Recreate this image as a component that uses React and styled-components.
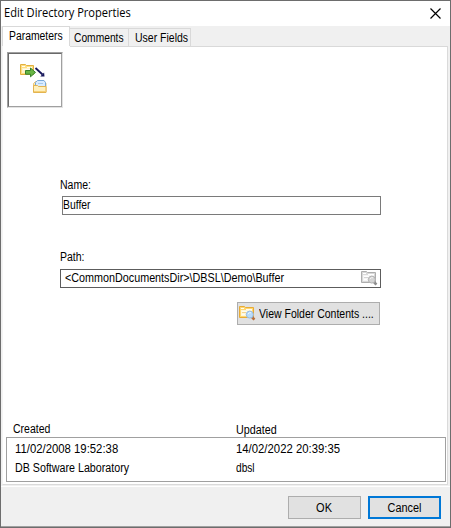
import React from 'react';
import styled, { createGlobalStyle } from 'styled-components';

const Global = createGlobalStyle`
  * { box-sizing: border-box; }
  body { margin: 0; background: #fff; }
`;

const Dialog = styled.div`
  width: 451px;
  height: 528px;
  display: flex;
  flex-direction: column;
  background: #f0f0f0;
  border: 1px solid #6d6d6d;
  color: #000;
  font: 12.5px/16px "Liberation Sans", Arial, sans-serif;
  overflow: hidden;
`;

/* The dialog face is narrower than the base font, so each label is condensed. */
const Text = styled.span`
  display: block;
  width: max-content;
  white-space: pre;
  margin-top: ${(p) => p.$drop || 0}px;
  transform: scaleX(${(p) => p.$scale || 0.84});
  transform-origin: ${(p) => p.$origin || 'left'} center;
`;

const TitleBar = styled.header`
  height: 25px;
  flex: none;
  display: flex;
  justify-content: space-between;
  background: #fff;
  padding: 4px 9px 0 3px;
  font: 12px/16px "Open Sans", "Noto Sans", sans-serif;
`;

const CloseButton = styled.button`
  width: 11px;
  height: 11px;
  margin-top: 3px;
  padding: 0;
  border: 0;
  background: none;
  svg { display: block; }
`;

const TabStrip = styled.nav`
  height: 20px;
  flex: none;
  display: flex;
  align-items: flex-end;
  padding-left: 1px;
`;

const Tab = styled.div`
  width: ${(p) => p.$width}px;
  height: ${(p) => (p.$active ? 20 : 18)}px;
  padding: ${(p) => (p.$active ? '1px 0 0 6px' : `1px 0 0 ${p.$indent}px`)};
  background: ${(p) => (p.$active ? '#fff' : '#f0f0f0')};
  border: solid #d9d9d9;
  border-width: 1px 1px 0 ${(p) => (p.$active ? 1 : 0)}px;
`;

const Page = styled.main`
  height: 439px;
  flex: none;
  margin: 0 2px 0 1px;
  display: flex;
  flex-direction: column;
  background: #fff;
  border: 1px solid #dadada;
  border-left-color: #f4f4f4;
  border-top: 0;
`;

const PageEdge = styled.div`
  height: 1px;
  flex: none;
  margin-left: 67px;
  background: #d9d9d9;
`;

const IconFrame = styled.div`
  width: 56px;
  height: 56px;
  flex: none;
  margin: 5px 0 0 4px;
  border: 1px solid;
  border-color: #a0a0a0 #e3e3e3 #e3e3e3 #a0a0a0;
`;

const IconWell = styled.div`
  width: 54px;
  height: 54px;
  border: 1px solid;
  border-color: #696969 #a0a0a0 #a0a0a0 #696969;
  svg { display: block; }
`;

const Form = styled.section`
  height: 313px;
  flex: none;
  width: 378px;
  padding: 69px 0 0 57px;
`;

const Field = styled.div`
  height: 19px;
  display: flex;
  justify-content: space-between;
  margin: ${(p) => p.$margin};
  padding: ${(p) => p.$pad};
  border: 1px solid ${(p) => p.$line};
  svg { display: block; margin-top: 1px; }
`;

const PathLabel = styled.div`
  margin-top: 34px;
  height: 20px;
`;

const Button = styled.button`
  display: flex;
  width: ${(p) => p.$width || 73}px;
  height: 23px;
  padding: 0;
  align-items: center;
  justify-content: ${(p) => (p.$leading ? 'flex-start' : 'center')};
  margin: ${(p) => p.$margin || 0};
  font: inherit;
  color: inherit;
  background: #e1e1e1;
  border: ${(p) => (p.$focused ? '2px solid #0078d7' : '1px solid #adadad')};
  svg { flex: none; margin: 0 3px 1px 1px; }
`;

const Columns = styled.div`
  display: grid;
  grid-template-columns: ${(p) => p.$first}px 1fr;
  padding-left: ${(p) => p.$indent}px;
`;

const Headings = styled(Columns)`
  height: 17px;
  flex: none;
`;

const AuditBox = styled.section`
  height: 45px;
  flex: none;
  margin: -1px 1px 0 3px;
  border: 1px solid #a0a0a0;
  padding-top: 3px;
  display: flex;
  flex-direction: column;
  gap: 3px;
`;

const Footer = styled.footer`
  flex: 1;
  margin-top: 1px;
  display: flex;
  gap: 7px;
  justify-content: flex-end;
  padding: 9px 9px 0 0;
  border-top: 1px solid #fff;
  border-bottom: 1px solid #a0a0a0;
`;

const BrowseIcon = ({ muted }) => {
  const c = muted
    ? { edge: '#adadad', body: '#d9d9d9', paper: '#f5f5f5', lens: '#d4d4d4', rim: '#b3b3b3', grip: '#8c8c8c' }
    : { edge: '#e8ab35', body: '#ffd772', paper: '#fff6d8', lens: '#b9dcfa', rim: '#96bbe3', grip: '#b7703d' };
  return (
    <svg width="17" height="15" viewBox="0 0 17 15">
      <path d="M.5.5h5l1 1h8v10H.5z" fill={c.body} stroke={c.edge} />
      <path d="M2 4h11v6H2z" fill={c.paper} />
      <path d="M2 2.5h3M7 3.5h6M3 5.5h5M3 8.5h3" stroke={muted ? '#fff' : '#fffdf1'} />
      <path d="M3 6.5h4" stroke={c.edge} opacity=".45" />
      <path d="M13 11l2.4 2.6" stroke={c.grip} strokeWidth="2.6" />
      <circle cx="10.8" cy="8.6" r="3.5" fill={c.lens} stroke={c.rim} />
      <path d="M9 8q1-1.8 3-1.3" stroke="#fff" fill="none" opacity=".7" />
    </svg>
  );
};

const TransferIcon = () => (
  <svg width="52" height="52" viewBox="0 0 52 52">
    <path d="M11.5 10.5h5l1 1h7v9h-13z" fill="#ffdf82" stroke="#e2b03f" />
    <path d="M13 14h10v5H13z" fill="#fff3c6" />
    <path d="M13 12.5h3M18 13.5h5M14 15.5h7" stroke="#fffdf0" />
    <path d="M16.5 16.5h5v-2.5l5 4.4-5 4.4v-2.6h-5z" fill="#68b545" stroke="#38822c" />
    <path d="M26.5 14l7 6.5" stroke="#17175c" strokeWidth="1.8" />
    <path d="M35.5 22.5h-4.2l3.8-4z" fill="#17175c" />
    <path d="M24.5 38v-8.5l2-2h9l1.5 2V38z" fill="#ffe9ad" stroke="#e8c57a" />
    <path d="M26.5 33v-4.5l2-2H35l1.500 2V33z" fill="#d8ebff" stroke="#78a8d9" />
    <path d="M29 29.5h5" stroke="#a8caec" />
    <path d="M24.5 31.5h4l1 1H37v6H24.5z" fill="#fff0bd" stroke="#e3b450" />
    <path d="M25 37.5h12" stroke="#f5cf75" />
  </svg>
);

export default function App() {
  return (
    <Dialog>
      <Global />
      <TitleBar>
        <Text $scale={0.925}>Edit Directory Properties</Text>
        <CloseButton aria-label="Close">
          <svg width="11" height="11" viewBox="0 0 11 11">
            <path d="M.5.5l10 10M10.5.5l-10 10" stroke="#000" strokeWidth="1.2" />
          </svg>
        </CloseButton>
      </TitleBar>
      <TabStrip>
        <Tab $active $width={68}><Text $scale={0.83}>Parameters</Text></Tab>
        <Tab $width={59} $indent={4}><Text $scale={0.82}>Comments</Text></Tab>
        <Tab $width={62} $indent={6}><Text>User Fields</Text></Tab>
      </TabStrip>
      <Page>
        <PageEdge />
        <IconFrame><IconWell><TransferIcon /></IconWell></IconFrame>
        <Form>
          <Text>Name:</Text>
          <Field $line="#7a7a7a" $margin="3px 0 0 2px" $pad="0">
            <Text $scale={0.83}>Buffer</Text>
          </Field>
          <PathLabel><Text>Path:</Text></PathLabel>
          <Field $line="#5c5c5c" $margin="0" $pad="0 2px 0 4px">
            <Text $scale={0.862}>{'<CommonDocumentsDir>\\DBSL\\Demo\\Buffer'}</Text>
            <BrowseIcon muted />
          </Field>
          <Button $width={143} $leading $margin="14px 0 0 177px">
            <BrowseIcon />
            <Text>View Folder Contents ....</Text>
          </Button>
        </Form>
        <Headings $indent={10} $first={223}>
          <Text>Created</Text>
          <Text $scale={0.86} $drop={1}>Updated</Text>
        </Headings>
        <AuditBox>
          <Columns $indent={8} $first={221}>
            <Text $scale={0.907}>11/02/2008 19:52:38</Text>
            <Text $scale={0.907}>14/02/2022 20:39:35</Text>
          </Columns>
          <Columns $indent={8} $first={221}>
            <Text $scale={0.855}>DB Software Laboratory</Text>
            <Text $scale={0.81}>dbsl</Text>
          </Columns>
        </AuditBox>
      </Page>
      <Footer>
        <Button><Text $origin="center" $scale={0.88}>OK</Text></Button>
        <Button $focused><Text $origin="center" $scale={0.87}>Cancel</Text></Button>
      </Footer>
    </Dialog>
  );
}
